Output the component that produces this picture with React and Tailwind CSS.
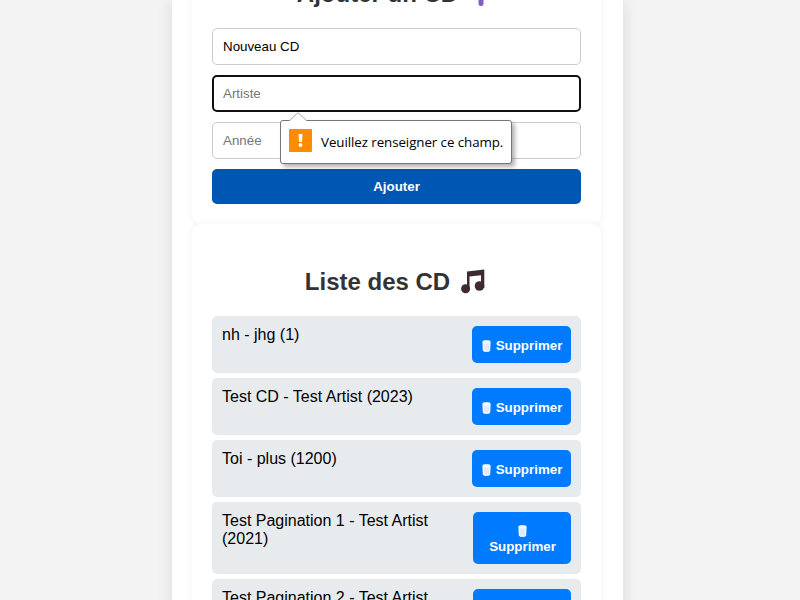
import React from 'react';

const cds = [
  { label: 'nh - jhg (1)' },
  { label: 'Test CD - Test Artist (2023)' },
  { label: 'Toi - plus (1200)' },
  { label: 'Test Pagination 1 - Test Artist (2021)', stacked: true },
  { label: 'Test Pagination 2 - Test Artist (2021)', stacked: true },
];

function TrashIcon() {
  return (
    <svg width="9" height="12" viewBox="0 0 9 12" className="shrink-0">
      <path d="M.8 1.800h7.400l-.2 8.400q-.1 1.300-1.300 1.300h-4.400Q1.100 11.500 1 10.200Z" fill="#dfebfc" />
      <path d="M1 2 1.300 10.600M8 2 7.700 10.600M2 11.200h5" stroke="#fff" strokeWidth="1" />
      <ellipse cx="4.500" cy="1.800" rx="3.800" ry="1.200" fill="#eef3fb" stroke="#fff" strokeWidth=".8" />
    </svg>
  );
}

function NotesIcon() {
  return (
    <svg width="32" height="28" viewBox="0 0 32 28">
      <path d="M11 3.600 28.300 1.500V20H25V7.200L13.500 8.600V22H11Z" fill="#402a32" />
      <circle cx="9.600" cy="20.800" r="4.500" fill="#402a32" />
      <circle cx="23.500" cy="18" r="4.800" fill="#402a32" />
    </svg>
  );
}

function PlusIcon() {
  return (
    <svg width="32" height="28" viewBox="0 0 32 28">
      <path d="M17 5V23.500M7 14.500H27" stroke="#7e5fc6" strokeWidth="5" strokeLinecap="round" />
    </svg>
  );
}

function Heading({ children, icon }) {
  return (
    <h2 className="mt-6 mb-5 flex h-7 items-center justify-center gap-[6px] text-2xl leading-7 font-bold text-[#333]">
      <span>{children}</span>
      {icon}
    </h2>
  );
}

function Card({ children, className = '' }) {
  return (
    <section className={`w-[409px] rounded-[10px] bg-white p-5 shadow-[0_0_10px_rgba(0,0,0,0.06)] ${className}`}>
      {children}
    </section>
  );
}

function ValidationBubble() {
  return (
    <div className="absolute top-[45px] left-[68px] z-10 flex h-11 w-[232px] items-center rounded-[3px] border border-[#767676] bg-white pl-2 shadow-[3px_3px_4px_rgba(0,0,0,0.3)]">
      <svg width="18" height="9" viewBox="0 0 18 9" className="absolute -top-[9px] left-[8px]">
        <path d="M.5 9 9 .7 17.500 9Z" fill="#fff" />
        <path d="M.5 8.500 9 .7 17.500 8.500" fill="none" stroke="#aaa" />
      </svg>
      <svg width="23" height="23" viewBox="0 0 23 23" className="-mt-[3px]">
        <rect width="23" height="23" rx="1" fill="#ff8c00" />
        <path d="M9.500 5h4l-.5 8h-3Z" fill="#fff" />
        <circle cx="11.500" cy="16" r="1.900" fill="#fff" />
      </svg>
      <span className="mt-px ml-[9px] font-['Open_Sans','Noto_Sans',sans-serif] text-[13.33px] tracking-[-0.07px] whitespace-nowrap text-black">
        Veuillez renseigner ce champ.
      </span>
    </div>
  );
}

const field =
  'block h-[37px] w-full rounded-[5px] bg-white text-[13.333px] text-black placeholder:text-[#757575] outline-none';

export default function App() {
  return (
    <div className="flex h-[600px] justify-center overflow-hidden bg-[#f3f3f3] pr-[5px] font-['Liberation_Sans',Arial,sans-serif]">
      <main className="h-[900px] w-[451px] shrink-0 bg-white px-5 pb-5 shadow-[0_0_15px_rgba(0,0,0,0.1)]">
        <Card className="-mt-16">
          <Heading icon={<PlusIcon />}>Ajouter un CD</Heading>
          <form className="flex flex-col gap-[10px]" noValidate>
            <input className={`${field} border border-[#ccc] px-[10px]`} defaultValue="Nouveau CD" />
            <div className="relative">
              <input className={`${field} border-2 border-[#101010] px-[9px]`} placeholder="Artiste" />
              <ValidationBubble />
            </div>
            <input className={`${field} border border-[#ccc] px-[10px]`} placeholder="Année" />
            <button type="button" className="h-[35px] rounded-[5px] bg-[#0056b3] text-[13.333px] font-bold text-white">
              Ajouter
            </button>
          </form>
        </Card>
        <Card>
          <Heading icon={<NotesIcon />}>Liste des CD</Heading>
          <ul className="flex flex-col gap-[5px]">
            {cds.map(({ label, stacked }) => (
              <li key={label} className="flex items-start justify-between rounded-[5px] bg-[#e8ebee] p-[10px] text-base leading-[18px] text-black">
                <span className="w-[225px]">{label}</span>
                <button
                  type="button"
                  className={
                    stacked
                      ? 'flex h-[52px] w-[98px] flex-col items-center justify-center gap-[2px] rounded-[5px] bg-[#007bff] pt-[3px] pl-px text-[13.333px] leading-[15px] font-bold text-white'
                      : 'flex h-[37px] w-[99px] items-center justify-center gap-[5px] rounded-[5px] bg-[#007bff] pt-[2px] pl-px text-[13.333px] leading-[15px] font-bold text-white'
                  }
                >
                  <TrashIcon />
                  <span>Supprimer</span>
                </button>
              </li>
            ))}
          </ul>
        </Card>
      </main>
    </div>
  );
}
